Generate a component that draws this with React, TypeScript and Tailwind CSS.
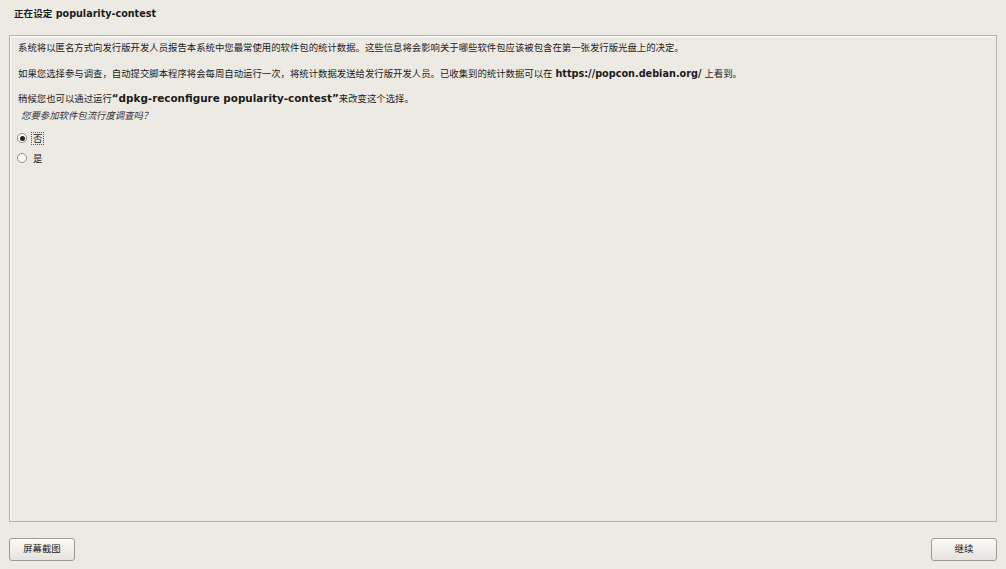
const cjk = "font-['DejaVu_Sans','Noto_Sans_CJK_SC',sans-serif]";

function Radio({ checked, label, focused }: { checked: boolean; label: string; focused?: boolean }) {
  return (
    <div className="flex items-center gap-[5px] h-[12px]">
      <span className="w-[10px] h-[10px] rounded-full border border-[#8c8a85] bg-white flex items-center justify-center">
        {checked && <span className="w-[5px] h-[5px] rounded-full bg-[#222]" />}
      </span>
      <span
        className={`text-[9.4px] leading-[11px] px-[1px] ${
          focused ? "outline outline-1 outline-dotted outline-[#555]" : ""
        }`}
      >
        {label}
      </span>
    </div>
  );
}

function Button({ label }: { label: string }) {
  return (
    <button className="w-[66px] h-[23px] rounded-[3px] border border-[#9d9a94] bg-gradient-to-b from-[#fbfaf8] to-[#e6e3de] text-[9.4px] text-[#222] shadow-[inset_0_1px_0_#fff]">
      {label}
    </button>
  );
}

export default function App() {
  return (
    <div className={`w-[1006px] h-[569px] bg-[#edeae4] text-[#1a1a1a] flex flex-col ${cjk}`}>
      {/* header */}
      <div className="h-[35px] flex items-center pl-[14px] pb-[8px] pt-[2px]">
        <h1 className="text-[9.6px] font-bold">正在设定 popularity-contest</h1>
      </div>

      {/* main panel */}
      <div className="mx-[9px] flex-1 border border-[#b5b1aa] shadow-[inset_1px_1px_0_#fff] pl-[8px] pt-[6px] text-[9.4px] leading-[11px]">
        <p>系统将以匿名方式向发行版开发人员报告本系统中您最常使用的软件包的统计数据。这些信息将会影响关于哪些软件包应该被包含在第一张发行版光盘上的决定。</p>
        <p className="mt-[15px]">
          如果您选择参与调查，自动提交脚本程序将会每周自动运行一次，将统计数据发送给发行版开发人员。已收集到的统计数据可以在{" "}
          <span className="font-bold text-[9.7px]">https://popcon.debian.org/</span> 上看到。
        </p>
        <p className="mt-[14px]">
          稍候您也可以通过运行<span className="font-bold text-[10.4px]">“dpkg-reconfigure popularity-contest”</span>来改变这个选择。
        </p>
        <p className="mt-[6px] pl-[3px] italic text-[#333]">您要参加软件包流行度调查吗？</p>
        <div className="mt-[11px] -ml-[1px] flex flex-col gap-[8px]">
          <Radio checked label="否" focused />
          <Radio checked={false} label="是" />
        </div>
      </div>

      {/* footer */}
      <div className="h-[47px] flex items-start justify-between px-[9px] pt-[16px]">
        <Button label="屏幕截图" />
        <Button label="继续" />
      </div>
    </div>
  );
}
